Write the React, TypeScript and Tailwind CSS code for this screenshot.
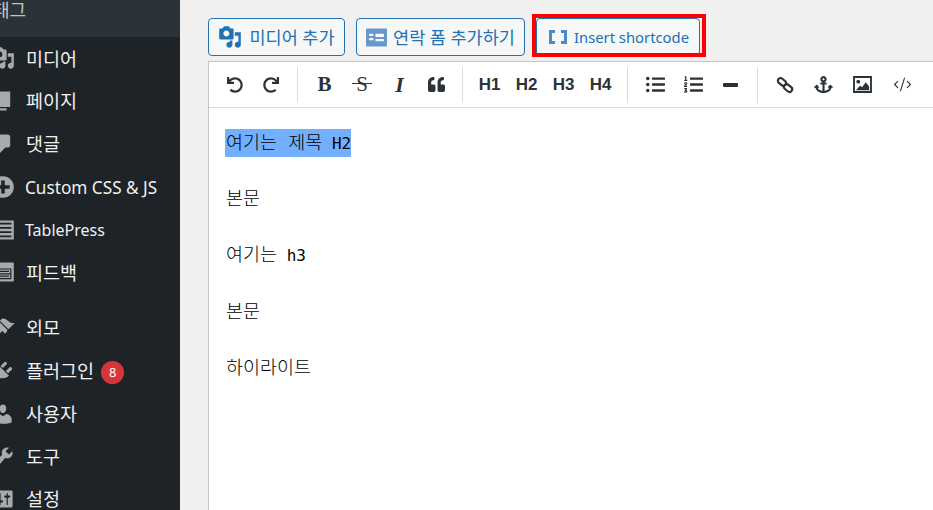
import React from 'react';
import { FaUndo, FaRedo, FaQuoteLeft, FaListUl, FaListOl, FaAnchor } from 'react-icons/fa';
import { CodeXml } from 'lucide-react';

const mediaPath =
  'M13 11V4c0-.55-.45-1-1-1h-1.67L9 1H5L3.67 3H2c-.55 0-1 .45-1 1v7c0 .55.45 1 1 1h10c.55 0 1-.45 1-1zM7 4.5c1.38 0 2.5 1.12 2.5 2.5S8.38 9.5 7 9.5 4.5 8.38 4.5 7 5.62 4.5 7 4.5zM14 6h5v10.5c0 1.38-1.12 2.5-2.5 2.5S14 17.88 14 16.5s1.12-2.5 2.5-2.5c.17 0 .34.02.5.05V9h-3V6zm-4 8.05V13h2v3.5c0 1.38-1.12 2.5-2.5 2.5S7 17.88 7 16.5 8.12 14 9.5 14c.17 0 .34.02.5.05z';

const menuItems = [
  { label: '미디어', d: mediaPath, text: 'text-[18.5px]' },
  { label: '페이지', d: 'M6 15V2h10v13H6zm-1 1h8v2H3V5h2v11z', text: 'text-[18.5px]' },
  { label: '댓글', d: 'M5 2h9c1.1 0 2 .9 2 2v7c0 1.1-.9 2-2 2h-2l-5 5v-5H5c-1.1 0-2-.9-2-2V4c0-1.1.9-2 2-2z', text: 'text-[18.5px]' },
  { label: 'Custom CSS & JS', d: 'M10 1c-5 0-9 4-9 9s4 9 9 9 9-4 9-9-4-9-9-9zm1.5 14.5h-3v-4h-4v-3h4v-4h3v4h4v3h-4v4z', text: '-ml-[1px] mt-[2px] text-[17.2px]' },
  { label: 'TablePress', d: 'M1 2h18v16H1V2zm2 2v1.5h14V4H3zm0 3.5V9h14V7.5H3zM3 11v1.5h14V11H3zm0 3.5V16h14v-1.5H3z', text: '-ml-[1px] mt-[1px] text-[16px]' },
  { label: '피드백', d: 'M2 2h16c.55 0 1 .45 1 1v14c0 .55-.45 1-1 1H2c-.55 0-1-.45-1-1V3c0-.55.45-1 1-1zm1 5v9h14V7H3zm1 1h12v3H4V8zm0 4h12v3H4v-3zm1-3v1h10V9H5zm0 4v1h10v-1H5z', text: 'text-[18.5px]' },
  { label: '외모', d: 'M14.48 11.06L7.41 3.99l1.5-1.5c.5-.56 2.3-.47 3.51.32 1.21.8 1.43 1.28 2.91 2.1 1.18.64 2.45 1.26 4.45.85zm-.71.71L6.7 4.7 4.93 6.47c-.39.39-.39 1.02 0 1.41l1.06 1.06c.39.39.39 1.03 0 1.42-.6.6-1.43 1.11-2.21 1.69-.35.26-.7.53-1.01.84-1.34 1.34-1.6 2.96-.6 3.96s2.6.7 3.9-.6c.3-.3.6-.7.9-1 .6-.8 1.1-1.6 1.7-2.2.39-.39 1.03-.39 1.42 0l1.06 1.06c.39.39 1.02.39 1.41 0z', text: 'text-[18.5px]', gap: true },
  { label: '플러그인', d: 'M13.11 4.36L9.87 7.6 8 5.73l3.24-3.24c.35-.34 1.05-.2 1.56.32.52.51.66 1.21.31 1.55zm-8 1.77l.91-1.12 9.01 9.01-1.19.84c-.71.71-2.63 1.16-3.82 1.16H6.14L4.9 17.26c-.59.59-1.54.59-2.12 0-.59-.58-.59-1.53 0-2.12l1.24-1.24v-3.88c0-1.13.4-3.19 1.09-3.89zm7.26 3.97l3.24-3.24c.34-.35 1.04-.21 1.55.31.52.51.66 1.21.31 1.55l-3.24 3.25z', text: 'text-[18.5px]', badge: '8' },
  { label: '사용자', d: 'M10 9.25c-2.27 0-2.73-3.44-2.73-3.44C7 4.02 7.82 2 9.97 2c2.16 0 2.98 2.02 2.71 3.81 0 0-.41 3.44-2.68 3.44zm0 2.57L12.72 10c2.39 0 4.52 2.33 4.52 4.53v2.49s-3.65 1.13-7.24 1.13c-3.65 0-7.24-1.13-7.24-1.13v-2.49c0-2.25 1.94-4.48 4.47-4.48z', text: 'text-[18.5px]' },
  { label: '도구', d: 'M16.68 9.77c-1.34 1.34-3.3 1.67-4.95.99l-5.41 6.52c-.99.99-2.59.99-3.58 0s-.99-2.59 0-3.57l6.52-5.42c-.68-1.65-.35-3.61.99-4.95 1.28-1.28 3.12-1.62 4.72-1.06l-2.89 2.89 2.82 2.82 2.86-2.87c.53 1.58.18 3.39-1.08 4.65zM3.81 16.21c.4.39 1.04.39 1.43 0 .4-.4.4-1.04 0-1.43-.39-.4-1.03-.4-1.43 0-.39.39-.39 1.03 0 1.43z', text: 'text-[18.5px]' },
  { label: '설정', d: 'M18 16V4c0-.55-.45-1-1-1H3c-.55 0-1 .45-1 1v12c0 .55.45 1 1 1h14c.55 0 1-.45 1-1zM8 11h1c.55 0 1 .45 1 1s-.45 1-1 1H8v1.5c0 .28-.22.5-.5.5s-.5-.22-.5-.5V13H6c-.55 0-1-.45-1-1s.45-1 1-1h1V5.5c0-.28.22-.5.5-.5s.5.22.5.5V11zm5-2h-1c-.55 0-1-.45-1-1s.45-1 1-1h1V5.5c0-.28.22-.5.5-.5s.5.22.5.5V7h1c.55 0 1 .45 1 1s-.45 1-1 1h-1v5.5c0 .28-.22.5-.5.5s-.5-.22-.5-.5V9z', text: 'text-[18.5px]' },
];

function Dash({ d, className }: { d: string; className?: string }) {
  return (
    <svg viewBox="0 0 20 20" className={className} fill="currentColor" fillRule="evenodd">
      <path d={d} />
    </svg>
  );
}

function Sidebar() {
  return (
    <aside className="w-[180px] shrink-0 overflow-hidden bg-[#1d2327] font-['Noto_Sans','Noto_Sans_CJK_KR',sans-serif] text-[#f0f0f1]">
      <div className="h-[37px] bg-[#2c3338] text-[18px] leading-[20px] text-[#c3c4c7]">
        <div className="-ml-[7px]">태그</div>
      </div>
      {menuItems.map((item) => (
        <div
          key={item.label}
          className={`flex h-[42.8px] items-center gap-[11px] -ml-[9px] ${item.gap ? 'mt-[13px]' : ''}`}
        >
          <Dash d={item.d} className="h-6 w-6 shrink-0 text-[#a7aaad]" />
          <span className={`whitespace-nowrap ${item.text}`}>{item.label}</span>
          {item.badge && (
            <span className="-ml-[4px] mt-[3px] flex h-[23px] w-[23px] items-center justify-center rounded-full bg-[#d63638] text-[13px] text-white">
              {item.badge}
            </span>
          )}
        </div>
      ))}
    </aside>
  );
}

function ToolBtn({ children, className }: { children: React.ReactNode; className?: string }) {
  return (
    <div className={`flex h-[30px] items-center justify-center text-[#2c3338] ${className ?? 'w-[37px]'}`}>
      {children}
    </div>
  );
}

function Divider() {
  return <div className="mx-[8px] h-[36px] w-px bg-[#dcdcde]" />;
}

function Toolbar() {
  return (
    <div className="flex h-[46px] items-center border-b border-b-[#dcdcde] pl-[8px] font-['Liberation_Sans',sans-serif]">
      <ToolBtn className="w-[36px]"><FaUndo size={16} /></ToolBtn>
      <ToolBtn className="w-[36px]"><FaRedo size={16} /></ToolBtn>
      <Divider />
      <ToolBtn className="w-[37px]">
        <span className="font-['Liberation_Serif',serif] text-[21px] font-bold">B</span>
      </ToolBtn>
      <ToolBtn className="w-[38px]">
        <span className="relative font-['Liberation_Serif',serif] text-[21px]">
          S
          <span className="absolute left-[-4px] right-[-4px] top-[14px] h-[1.5px] bg-[#2c3338]" />
        </span>
      </ToolBtn>
      <ToolBtn className="w-[37px]">
        <span className="font-['Liberation_Serif',serif] text-[22px] font-bold italic">I</span>
      </ToolBtn>
      <ToolBtn className="w-[36px]"><FaQuoteLeft size={17} /></ToolBtn>
      <Divider />
      {['H1', 'H2', 'H3', 'H4'].map((h) => (
        <ToolBtn key={h}>
          <span className="text-[17px] font-bold">{h}</span>
        </ToolBtn>
      ))}
      <Divider />
      <ToolBtn className="w-[38px]"><FaListUl size={19} /></ToolBtn>
      <ToolBtn className="w-[38px]"><FaListOl size={19} /></ToolBtn>
      <ToolBtn className="w-[37px]"><span className="h-[4px] w-[15px] rounded-[1px] bg-[#2c3338]" /></ToolBtn>
      <Divider />
      <ToolBtn className="w-[38px]">
        <svg viewBox="0 0 20 20" className="h-[18px] w-[18px]" fill="none" stroke="currentColor" strokeWidth="2.4">
          <rect x="1.6" y="3.6" width="10" height="6" rx="3" transform="rotate(40 6.6 6.6)" />
          <rect x="8.4" y="10.4" width="10" height="6" rx="3" transform="rotate(40 13.4 13.4)" />
        </svg>
      </ToolBtn>
      <ToolBtn className="w-[38px]"><FaAnchor size={19} /></ToolBtn>
      <ToolBtn className="w-[40px]">
        <svg viewBox="0 0 20 18" className="h-[17px] w-[19px]">
          <path fill="currentColor" fillRule="evenodd" d="M0 0h20v18H0V0zm2 2v14h16V2H2z" />
          <circle cx="5.5" cy="6" r="2" fill="currentColor" />
          <path fill="currentColor" d="M3 15l4.5-5 2 2 4-5.5L17 11v4z" />
        </svg>
      </ToolBtn>
      <ToolBtn className="w-[40px]"><CodeXml size={19} strokeWidth={1.4} /></ToolBtn>
    </div>
  );
}

function TopButton({ icon, label, labelClass, highlight, gapClass, width }: { icon: React.ReactNode; label: string; labelClass: string; highlight?: boolean; gapClass: string; width: string }) {
  return (
    <div className={`relative flex h-[38px] items-center justify-center rounded-[4px] border border-[#2271b1] bg-[#f6f7f7] text-[#2271b1] ${gapClass} ${width}`}>
      {icon}
      <span className={`whitespace-nowrap ${labelClass}`}>{label}</span>
      {highlight && <div className="absolute -bottom-[2px] -left-[5px] -right-[7px] -top-[5px] border-4 border-[#ff0000]" />}
    </div>
  );
}

function Editor() {
  return (
    <div className="flex-1 bg-[#f0f0f1] pl-[28px] pt-[18px]">
      <div className="flex gap-[11px] font-['Noto_Sans','Noto_Sans_CJK_KR',sans-serif]">
        <TopButton
          width="w-[137px]"
          gapClass="gap-[7px]"
          labelClass="text-[17.5px]"
          label="미디어 추가"
          icon={<Dash d={mediaPath} className="h-6 w-6 text-[#2271b1]" />}
        />
        <TopButton
          width="w-[169px]"
          gapClass="gap-[6px]"
          labelClass="text-[17.5px]"
          label="연락 폼 추가하기"
          icon={
            <svg viewBox="0 1 20 17" className="h-[19px] w-[21px]">
              <path fill="#6699c9" fillRule="evenodd" d="M1 1h18a1 1 0 0 1 1 1v15a1 1 0 0 1-1 1H1a1 1 0 0 1-1-1V2a1 1 0 0 1 1-1zm2 5v2h4V6H3zm6 0v3h8V6H9zm-6 4v2h4v-2H3zm6 1v2h8v-2H9z" />
            </svg>
          }
        />
        <TopButton
          width="w-[164px] pl-[2px]"
          gapClass="gap-[7px]"
          labelClass="text-[14.8px]"
          highlight
          label="Insert shortcode"
          icon={
            <svg viewBox="0 0 18 16" className="h-[16px] w-[18px]">
              <path fill="#4a8cc7" d="M0 1h6v3H3v8h3v3H0zM18 1h-6v3h3v8h-3v3h6z" />
            </svg>
          }
        />
      </div>
      <div className="mt-[5px] h-[460px] border-l border-t border-[#c3c4c7] bg-white">
        <Toolbar />
        <div className="pl-[16px] pt-[21px] font-['DejaVu_Sans_Mono','Noto_Sans_CJK_KR',monospace] text-[18.5px] font-light leading-[28px] text-black">
          <p>
            <span className="inline-block h-[28px] bg-[#72b0ff] pl-px">
              여기는 제목<span className="text-[16px] font-normal"> H2</span>
            </span>
          </p>
          <p className="mt-[28px] pl-px">본문</p>
          <p className="mt-[28px] pl-px">
            여기는<span className="text-[16px] font-normal"> h3</span>
          </p>
          <p className="mt-[28px] pl-px">본문</p>
          <p className="mt-[28px] pl-px">하이라이트</p>
        </div>
      </div>
    </div>
  );
}

export default function App() {
  return (
    <div className="flex h-[510px] w-[933px] overflow-hidden">
      <Sidebar />
      <Editor />
    </div>
  );
}
